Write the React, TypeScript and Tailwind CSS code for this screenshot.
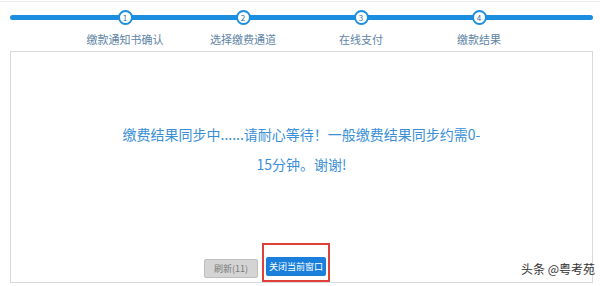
import React from 'react';

const steps = ['缴款通知书确认', '选择缴费通道', '在线支付', '缴款结果'];

export default function App() {
  return (
    <div
      className="relative w-[600px] h-[286px] overflow-hidden bg-white"
      style={{ fontFamily: '"Noto Sans CJK SC", "Noto Sans", sans-serif' }}
    >
      <div className="h-[2px] border-b border-[#ececec]" />

      {/* step bar */}
      <div className="relative h-[49px]">
        <div className="absolute left-[10px] right-[7px] top-[13px] h-[5px] rounded-full bg-[#1c8ee0]" />
        <div className="relative flex pl-[66px]">
          {steps.map((s, i) => (
            <div key={s} className="w-[118px] flex flex-col items-center">
              <div className="mt-[8px] w-[15px] h-[15px] rounded-full border-2 border-[#1c8ee0] bg-white flex items-center justify-center text-[8px] leading-none text-[#3b6d99]">
                {i + 1}
              </div>
              <div className="mt-[7px] text-[11px] leading-[14px] text-[#6084a6]">{s}</div>
            </div>
          ))}
        </div>
      </div>

      {/* panel */}
      <div className="ml-[10px] mr-[7px] h-[232px] border border-[#d9d9d9] flex flex-col items-center">
        <div className="mt-[67px] w-[420px] text-center text-[14px] leading-[30px] text-[#3a8fd6]">
          缴费结果同步中......请耐心等待！一般缴费结果同步约需0-
          <br />
          15分钟。谢谢!
        </div>
        <div className="mt-auto self-start ml-[193px] flex items-end gap-[4px]">
          <button className="mb-[4px] w-[54px] h-[19px] rounded-[2px] border border-[#bdbdbd] bg-[#d4d4d4] text-[9px] leading-none text-[#777]">
            刷新(11)
          </button>
          <div className="flex px-[2px] pt-[12px] pb-[4px] border-2 border-[#e0403a]">
            <button className="w-[60px] h-[19px] rounded-[2px] bg-[#1a7fdb] text-[9px] leading-none text-white">
              关闭当前窗口
            </button>
          </div>
        </div>
      </div>

      <div className="absolute right-[5px] bottom-[11px] text-[12px] leading-none text-[#333]">头条 @粤考苑</div>
    </div>
  );
}
